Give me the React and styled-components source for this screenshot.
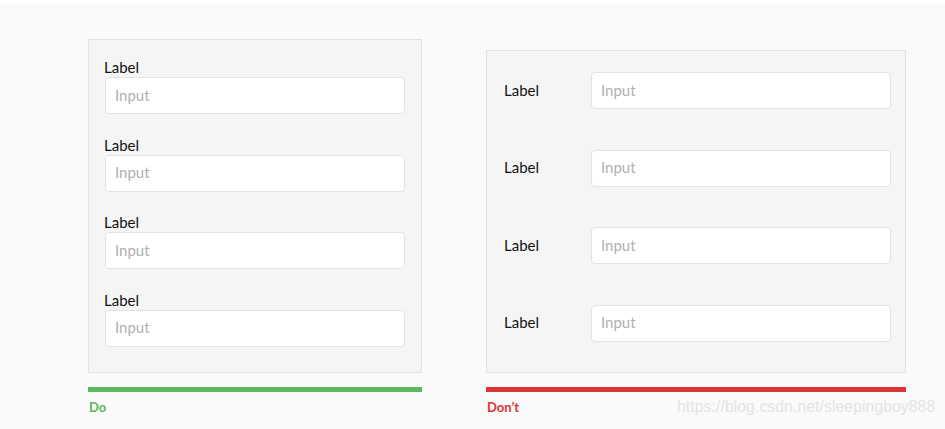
import React from "react";
import styled, { createGlobalStyle } from "styled-components";

const GlobalStyle = createGlobalStyle`
    html, body {
        margin: 0;
        padding: 0;
        background: #ffffff;
    }
    body {
        font-family: 'Lato', 'Liberation Sans', sans-serif;
    }
`;

const fields = [1, 2, 3, 4];

const App = () => {
    return (
        <>
            <GlobalStyle />
            <Page>
                <Examples>
                    <Column>
                        <StackedPanel>
                            {fields.map((n) => (
                                <StackedField key={n}>
                                    <Label>Label</Label>
                                    <Input placeholder="Input" />
                                </StackedField>
                            ))}
                        </StackedPanel>
                        <Bar color="#5cb85c" />
                        <Verdict color="#5cb85c">Do</Verdict>
                    </Column>
                    <Column>
                        <InlinePanel>
                            {fields.map((n) => (
                                <InlineField key={n}>
                                    <Label>Label</Label>
                                    <Input placeholder="Input" />
                                </InlineField>
                            ))}
                        </InlinePanel>
                        <Bar color="#d93438" />
                        <Verdict color="#d93438">Don’t</Verdict>
                    </Column>
                </Examples>
                <Watermark>https://blog.csdn.net/sleepingboy888</Watermark>
            </Page>
        </>
    );
};

const Page = styled.main`
    position: relative;
    margin-top: 4px;
    height: 425px;
    background: #fafafa;
    padding: 35px 0 0 88px;
    box-sizing: border-box;
    overflow: hidden;
`;

const Examples = styled.div`
    display: flex;
    align-items: flex-end;
    gap: 64px;
`;

const Column = styled.div`
    display: flex;
    flex-direction: column;
`;

const Panel = styled.div`
    display: flex;
    flex-direction: column;
    background: #f5f5f5;
    border: 1px solid #e2e2e2;
    box-sizing: border-box;
`;

const StackedPanel = styled(Panel)`
    width: 334px;
    height: 334px;
    padding: 17px 15px 0 15px;
    gap: 20.5px;
`;

const InlinePanel = styled(Panel)`
    width: 420px;
    height: 323px;
    padding: 21px 14px 0 17px;
    gap: 40.5px;
`;

const StackedField = styled.div`
    display: flex;
    flex-direction: column;
`;

const InlineField = styled.div`
    display: grid;
    grid-template-columns: 86px 300px;
    align-items: center;

    & > label {
        margin-top: -2px;
    }
`;

const Label = styled.label`
    font-family: 'Lato', 'Liberation Sans', sans-serif;
    font-size: 15px;
    line-height: 20px;
    color: #111;
`;

const Input = styled.input`
    width: 300px;
    height: 37px;
    margin-left: 1px;
    padding: 0 9px 2px 9px;
    box-sizing: border-box;
    background: #ffffff;
    border: 1px solid #e3e3e3;
    border-radius: 4px;
    font-family: 'Lato', 'Liberation Sans', sans-serif;
    font-size: 15px;
    color: #333;
    outline: none;

    &::placeholder {
        color: #b0b0b0;
    }
`;

const Bar = styled.div`
    height: 5px;
    margin-top: 14px;
    background: ${(props) => props.color};
`;

const Verdict = styled.div`
    margin-top: 7px;
    padding-left: 1px;
    font-family: 'Lato', 'Liberation Sans', sans-serif;
    font-size: 13px;
    font-weight: 700;
    line-height: 16px;
    color: ${(props) => props.color};
`;

const Watermark = styled.div`
    position: absolute;
    left: 677px;
    top: 394px;
    font-family: 'Liberation Sans', Arial, sans-serif;
    font-size: 15.7px;
    color: #e4e4e4;
    letter-spacing: 0.1px;
`;

export default App;
